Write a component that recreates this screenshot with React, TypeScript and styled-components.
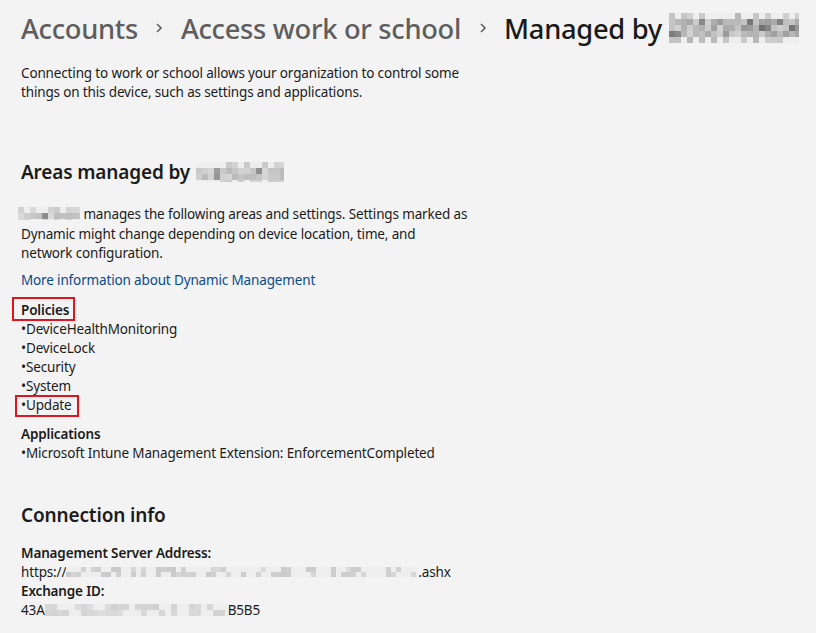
import React from "react";
import styled, { createGlobalStyle } from "styled-components";

const Global = createGlobalStyle`
  html, body { margin: 0; padding: 0; background: #f3f3f3; }
  body { font-family: "Noto Sans", "Open Sans", sans-serif; color: #1b1b1b; }
`;

const Page = styled.div`
  width: 816px;
  height: 633px;
  overflow: hidden;
  padding: 9px 0 0 21px;
  box-sizing: border-box;
`;

const Breadcrumb = styled.div`
  display: flex;
  align-items: center;
  height: 38px;
  font-size: 27.3px;
  font-weight: 500;
  letter-spacing: -0.3px;
  white-space: nowrap;
`;

const Crumb = styled.span<{ $current?: boolean }>`
  color: ${(p) => (p.$current ? "#1a1a1a" : "#5e5e5e")};
  display: inline-flex;
  align-items: center;
`;

const Chevron = styled.span`
  display: inline-flex;
  width: 43px;
  justify-content: center;
  color: #5e5e5e;
`;

const Text = styled.p<{ $mt?: number }>`
  margin: ${(p) => p.$mt ?? 0}px 0 0 0;
  font-size: 13.5px;
  line-height: 19px;
  width: 460px;
  letter-spacing: -0.15px;
`;

const Heading = styled.h2<{ $mt: number }>`
  margin: ${(p) => p.$mt}px 0 0 0;
  font-size: 19px;
  line-height: 26px;
  font-weight: 600;
  display: flex;
  align-items: center;
  gap: 6px;
  letter-spacing: -0.15px;
`;

const Link = styled.a`
  display: block;
  margin-top: 8px;
  font-size: 13.5px;
  line-height: 19px;
  color: #0a4b8c;
  text-decoration: none;
  letter-spacing: -0.15px;
`;

const Label = styled.div<{ $mt?: number }>`
  margin-top: ${(p) => p.$mt ?? 0}px;
  font-size: 13.5px;
  line-height: 19px;
  font-weight: 600;
  letter-spacing: -0.15px;
`;

const Item = styled.div`
  font-size: 13.5px;
  line-height: 19px;
  letter-spacing: -0.15px;
  white-space: nowrap;
  display: flex;
  align-items: center;
`;

const Marked = styled.span<{ $l: number; $r: number; $t: number; $b: number }>`
  position: relative;
  &::after {
    content: "";
    position: absolute;
    left: ${(p) => p.$l}px;
    right: ${(p) => p.$r}px;
    top: ${(p) => p.$t}px;
    bottom: ${(p) => p.$b}px;
    border: 2px solid #e0141e;
  }
`;

function rng(seed: number) {
  let s = seed;
  return () => {
    s = (s * 9301 + 49297) % 233280;
    return s / 233280;
  };
}

function Pixels({
  w,
  h,
  cell,
  seed,
  dark = 0.5,
  base = 200,
  range = 50,
}: {
  w: number;
  h: number;
  cell: number;
  seed: number;
  dark?: number;
  base?: number;
  range?: number;
}) {
  const r = rng(seed);
  const cols = Math.ceil(w / cell);
  const rows = Math.ceil(h / cell);
  const rects: React.ReactNode[] = [];
  for (let y = 0; y < rows; y++) {
    const edge = y === 0 || y === rows - 1;
    for (let x = 0; x < cols; x++) {
      let v = base - r() * range * (edge ? 0.5 : 1);
      if (!edge && r() < dark * 0.15) v -= 50;
      if (edge && r() < 0.5) v = 238;
      const g = Math.max(80, Math.min(242, Math.round(v)));
      rects.push(
        <rect key={`${x}-${y}`} x={x * cell} y={y * cell} width={cell} height={cell} fill={`rgb(${g},${g},${g})`} />
      );
    }
  }
  return (
    <svg width={w} height={h} viewBox={`0 0 ${w} ${h}`} shapeRendering="crispEdges" style={{ display: "inline-block", flex: "none" }}>
      {rects}
    </svg>
  );
}

const Inline = styled.span`
  display: inline-block;
  vertical-align: middle;
  margin-left: -3px;
`;

export default function App() {
  return (
    <Page>
      <Global />
      <Breadcrumb>
        <Crumb>Accounts</Crumb>
        <Chevron>
          <svg width="10" height="14" viewBox="0 0 10 14">
            <path d="M3 3 L7 7 L3 11" fill="none" stroke="#5e5e5e" strokeWidth="1.6" />
          </svg>
        </Chevron>
        <Crumb>Access work or school</Crumb>
        <Chevron>
          <svg width="10" height="14" viewBox="0 0 10 14">
            <path d="M3 3 L7 7 L3 11" fill="none" stroke="#5e5e5e" strokeWidth="1.6" />
          </svg>
        </Chevron>
        <Crumb $current>
          Managed by&nbsp;
          <Pixels w={130} h={30} cell={6} seed={7} base={210} range={55} dark={1} />
        </Crumb>
      </Breadcrumb>
      <Text $mt={17}>
        Connecting to work or school allows your organization to control some things on this device, such as settings and
        applications.
      </Text>
      <Heading $mt={57}>
        Areas managed by <Pixels w={88} h={20} cell={6} seed={3} base={215} range={30} />
      </Heading>
      <Text $mt={20}>
        <Inline>
          <Pixels w={62} h={13} cell={6} seed={11} base={220} range={35} />
        </Inline>{" "}
        manages the following areas and settings. Settings marked as
        <br />
        Dynamic might change depending on device location, time, and
        <br />
        network configuration.
      </Text>
      <Link href="#">More information about Dynamic Management</Link>
      <Label $mt={11}>
        <Marked $l={-9} $r={-6} $t={-4} $b={-2}>
          Policies
        </Marked>
      </Label>
      <Item>•DeviceHealthMonitoring</Item>
      <Item>•DeviceLock</Item>
      <Item>•Security</Item>
      <Item>•System</Item>
      <Item>
        <Marked $l={-6} $r={-7} $t={-1} $b={-2}>
          •Update
        </Marked>
      </Item>
      <Label $mt={10}>Applications</Label>
      <Item>•Microsoft Intune Management Extension: EnforcementCompleted</Item>
      <Heading $mt={39}>Connection info</Heading>
      <Label $mt={16}>Management Server Address:</Label>
      <Item>
        https://
        <Pixels w={352} h={10} cell={5} seed={21} base={218} range={35} />
        .ashx
      </Item>
      <Label>Exchange ID:</Label>
      <Item>
        43A
        <Pixels w={183} h={12} cell={6} seed={5} base={222} range={30} />
        B5B5
      </Item>
    </Page>
  );
}
